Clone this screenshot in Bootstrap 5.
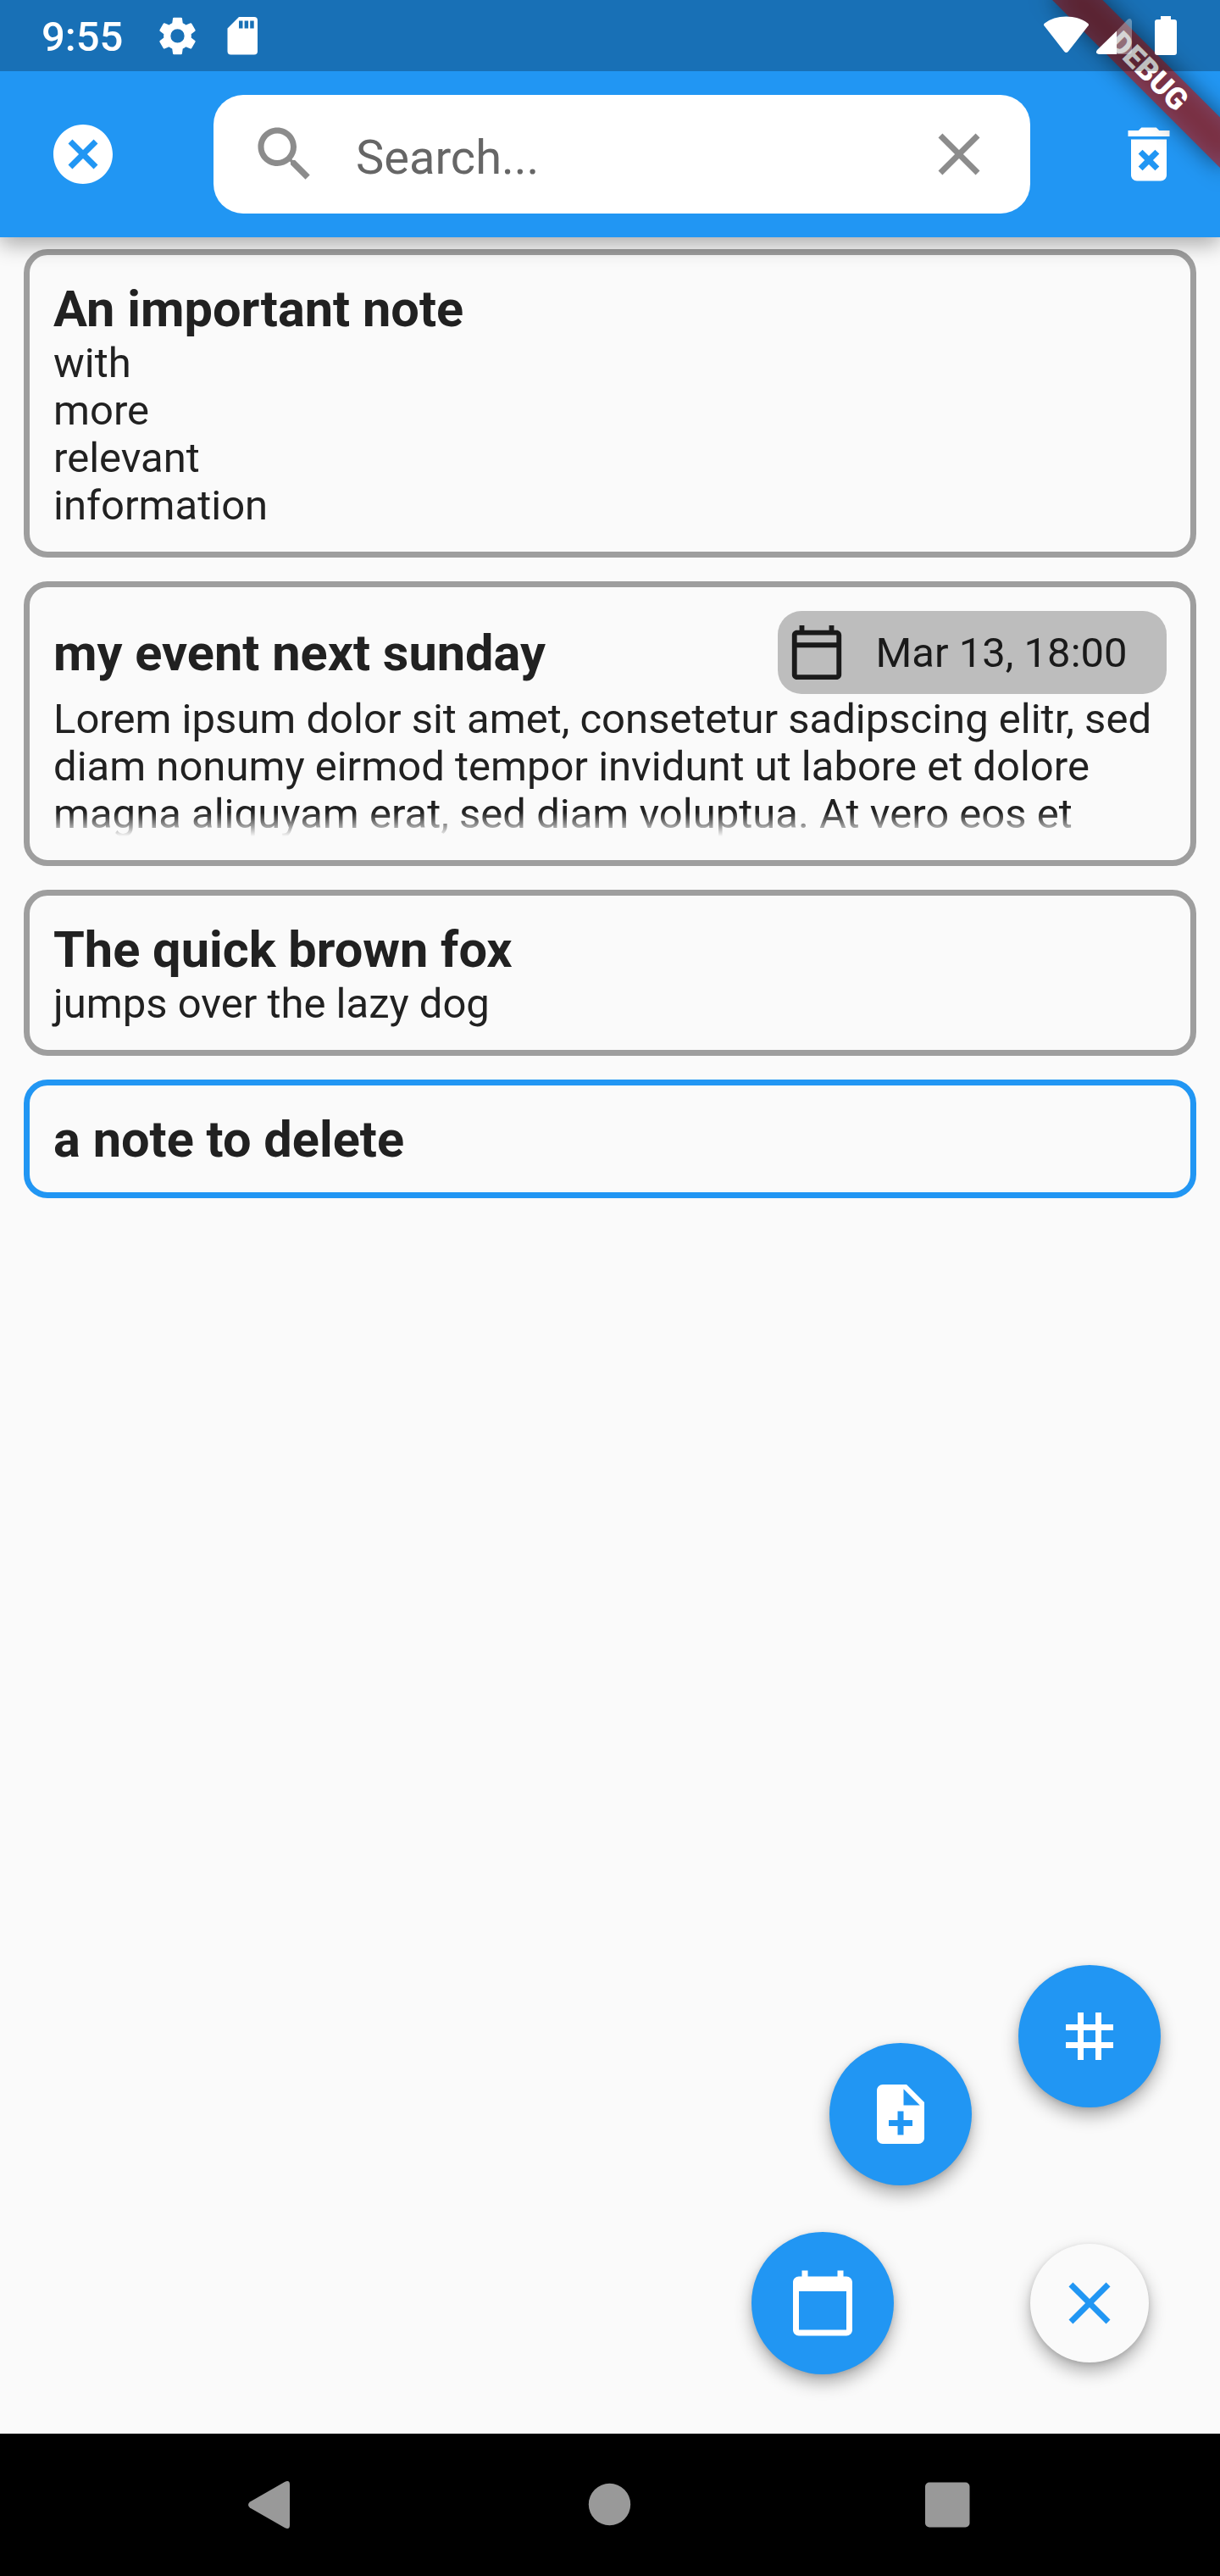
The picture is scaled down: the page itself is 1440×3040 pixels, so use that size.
<!DOCTYPE html>
<html lang="en">
<head>
<meta charset="utf-8">
<meta name="viewport" content="width=device-width, initial-scale=1">
<title>Notes</title>
<link href="https://cdn.jsdelivr.net/npm/bootstrap@5.3.0/dist/css/bootstrap.min.css" rel="stylesheet">
<style>
  body { font-family: Roboto, sans-serif; color: #212121; background: #fafafa; }
  .app-screen { width: 1440px; height: 3040px; background: #fafafa; }
  .status-strip { height: 84px; background: rgba(0,0,0,.25); color: #fff; z-index: 30; }
  .status-clock { font-size: 49px; font-weight: 500; line-height: 84px; padding-left: 49px; width: 188px; padding-top: 2px; }
  .top-shell { background: #2196f3; height: 280px; box-shadow: 0 8px 24px rgba(0,0,0,.33); z-index: 10; }
  .tool-row { height: 196px; padding: 0 42px 0 56px; }
  .ico { width: 84px; height: 84px; fill: currentColor; display: block; flex: none; }
  .search-pill { width: 964px; height: 140px; border-radius: 35px; background: #fff; padding: 0 42px; margin-left: 112px; color: #8c8c8c; }
  .search-pill input { font-size: 56px; line-height: 66px; padding: 7px 0 0; margin-left: 42px; }
  .search-pill input::placeholder { color: #666; opacity: 1; }
  .ribbon-clip { top: 0; right: 0; width: 300px; height: 280px; z-index: 20; pointer-events: none; }
  .ribbon-turn { left: 300px; top: 0; width: 0; height: 0; transform: rotate(45deg); transform-origin: 0 0; }
  .ribbon-shade, .ribbon-band { left: -140px; top: 98px; width: 280px; height: 42px; }
  .ribbon-shade { background: rgba(0,0,0,.5); filter: blur(14px); }
  .ribbon-band { background: rgba(183,28,28,.627); color: #fff; font-size: 35.7px; font-weight: 900; line-height: 42px; }
  .note-list { padding: 14px 28px; gap: 28px; }
  .note-box { border: 7px solid #9e9e9e; border-radius: 28px; padding: 28px; }
  .note-box.picked { border-color: #2196f3; }
  .note-title { font-size: 59.5px; font-weight: 700; line-height: 70px; margin: 0 0 -1px; padding-top: 1px; }
  .note-text { font-size: 49px; line-height: 56px; margin: 0 0 -2px; padding-top: 2px; }
  .note-fade { height: 168px; margin: 0; overflow: hidden; white-space: nowrap; -webkit-mask-image: linear-gradient(#000 calc(100% - 28px), transparent); mask-image: linear-gradient(#000 calc(100% - 28px), transparent); }
  .date-chip { width: 459px; height: 98px; border-radius: 28px; background: #bdbdbd; padding-left: 10.5px; color: #1a1a1a; font-size: 49px; line-height: 56px; }
  .date-chip span { padding-top: 2px; }
  .date-chip .ico { width: 70px; height: 70px; margin-right: 35px; }
  .dial { right: 70px; bottom: 237px; width: 484px; height: 484px; z-index: 5; }
  .dial-btn { width: 168px; height: 168px; background: #2196f3; color: #fff; border: 0; padding: 0; box-shadow: 0 10px 20px rgba(0,0,0,.3), 0 2px 6px rgba(0,0,0,.12); }
  .dial-tag { right: 0; top: 0; }
  .dial-note { left: 93px; top: 92px; }
  .dial-date { left: 1px; top: 315px; }
  .dial-close { width: 140px; height: 140px; right: 14px; top: 329px; background: #fafafa; color: #2196f3; }
  .sys-nav { height: 168px; background: #000; }
</style>
</head>
<body>
<div class="app-screen d-flex flex-column position-relative overflow-hidden">
  <header class="top-shell position-relative flex-shrink-0">
    <div class="status-strip position-relative d-flex">
      <div class="status-clock">9:55</div>
      <svg width="1252" height="84" viewBox="188 0 1252 84" fill="#fff" class="flex-shrink-0">
        <path transform="translate(182.300 15.200)  scale(2.266)" fill-rule="evenodd" d="M19.140 12.940c.04-.3.060-.610.060-.940 0-.32-.02-.64-.07-.94l2.030-1.580c.18-.14.230-.41.120-.610l-1.920-3.320c-.12-.22-.37-.29-.59-.22l-2.390.96c-.5-.38-1.030-.7-1.620-.94l-.36-2.540c-.04-.24-.24-.41-.48-.41h-3.840c-.24 0-.43.170-.470.410l-.36 2.540c-.59.240-1.130.570-1.620.940l-2.390-.96c-.22-.08-.47 0-.59.220L2.740 8.870c-.12.210-.08.470.12.610l2.030 1.580c-.05.3-.09.630-.09.940s.02.640.07.940l-2.030 1.580c-.18.140-.23.410-.12.610l1.920 3.320c.12.220.370.290.590.220l2.390-.96c.5.380 1.030.7 1.620.940l.36 2.540c.05.240.240.410.480.410h3.840c.24 0 .44-.17.470-.41l.36-2.540c.59-.24 1.130-.56 1.620-.94l2.390.96c.22.080.470 0 .59-.22l1.920-3.320c.12-.22.070-.47-.12-.61zM12 15.600a3.600 3.600 0 1 1 0-7.200 3.600 3.600 0 0 1 0 7.200z"/>
        <path fill-rule="evenodd" d="M282 20h18q4 0 4 4v36.500q0 4-4 4h-27.500q-4 0-4-4V33.500zM282 24.500v9h4.500v-9zm6.600 0v9h4.500v-9zm6.600 0v9h4.500v-9z"/>
        <path d="M1233 31q-2-2 0-3.500Q1243 19.500 1258.500 19.500T1284 27.500q2 1.500 0 3.500L1261 60.500q-2.500 3-5 0z"/>
        <path d="M1318 36.500V64h-21q-5-1-2-5z"/>
        <path opacity=".34" d="M1318 36.500V64h14q4 0 4-4V25q-1-4.500-5-2z"/>
        <path d="M1370 19h12v4h4q3 0 3 3v36q0 3-3 3h-20q-3 0-3-3V26q0-3 3-3h4z"/>
      </svg>
    </div>
    <nav class="tool-row d-flex align-items-center text-white">
      <svg class="ico" viewBox="0 0 24 24"><path d="M12 2C6.470 2 2 6.470 2 12s4.470 10 10 10 10-4.470 10-10S17.530 2 12 2zm5 13.590L15.590 17 12 13.410 8.410 17 7 15.590 10.590 12 7 8.410 8.410 7 12 10.590 15.590 7 17 8.410 13.410 12 17 15.590z"/></svg>
      <div class="search-pill d-flex align-items-center">
        <svg class="ico" viewBox="0 0 24 24"><path d="M15.500 14h-.79l-.28-.27C15.410 12.590 16 11.110 16 9.500 16 5.910 13.090 3 9.500 3S3 5.910 3 9.500 5.910 16 9.500 16c1.610 0 3.090-.59 4.230-1.570l.27.280v.79l5 4.990L20.490 19l-4.990-5zm-6 0C7.010 14 5 11.990 5 9.500S7.010 5 9.500 5 14 7.010 14 9.500 11.990 14 9.500 14z"/></svg>
        <input type="text" class="form-control border-0 bg-transparent shadow-none flex-grow-1" placeholder="Search..." aria-label="Search">
        <svg class="ico" viewBox="0 0 24 24"><path d="M19 6.410L17.590 5 12 10.590 6.410 5 5 6.410 10.590 12 5 17.590 6.410 19 12 13.410 17.590 19 19 17.590 13.410 12z"/></svg>
      </div>
      <svg class="ico ms-auto" viewBox="0 0 24 24"><path d="M6 19c0 1.100.9 2 2 2h8c1.100 0 2-.9 2-2V7H6v12zm2.460-7.120l1.410-1.410L12 12.590l2.120-2.120 1.410 1.410L13.410 14l2.120 2.120-1.410 1.410L12 15.410l-2.120 2.120-1.410-1.410L10.590 14l-2.130-2.120zM15.500 4l-1-1h-5l-1 1H5v2h14V4z"/></svg>
    </nav>
    <div class="ribbon-clip position-absolute overflow-hidden">
      <div class="ribbon-turn position-absolute">
        <div class="ribbon-shade position-absolute"></div>
        <div class="ribbon-band position-absolute text-center">DEBUG</div>
      </div>
    </div>
  </header>

  <main class="note-list d-flex flex-column flex-grow-1">
    <article class="note-box">
      <h2 class="note-title">An important note</h2>
      <p class="note-text">with<br>more<br>relevant<br>information</p>
    </article>
    <article class="note-box">
      <div class="d-flex align-items-center justify-content-between">
        <h2 class="note-title">my event next sunday</h2>
        <div class="date-chip d-flex align-items-center">
          <svg class="ico" viewBox="0 0 24 24"><path d="M20 3h-1V1h-2v2H7V1H5v2H4c-1.100 0-2 .9-2 2v16c0 1.100.9 2 2 2h16c1.100 0 2-.9 2-2V5c0-1.100-.9-2-2-2zm0 2v3H4V5h16zM4 21V10h16v11H4z"/></svg>
          <span>Mar 13, 18:00</span>
        </div>
      </div>
      <p class="note-text note-fade">Lorem ipsum dolor sit amet, consetetur sadipscing elitr, sed<br>diam nonumy eirmod tempor invidunt ut labore et dolore<br>magna aliquyam erat, sed diam voluptua. At vero eos et</p>
    </article>
    <article class="note-box">
      <h2 class="note-title">The quick brown fox</h2>
      <p class="note-text">jumps over the lazy dog</p>
    </article>
    <article class="note-box picked">
      <h2 class="note-title">a note to delete</h2>
    </article>
  </main>

  <div class="dial position-absolute">
    <button class="dial-btn dial-tag btn rounded-circle position-absolute d-flex align-items-center justify-content-center" aria-label="Tags"><svg class="ico" viewBox="0 0 24 24"><path d="M20 10V8h-4V4h-2v4h-4V4H8v4H4v2h4v4H4v2h4v4h2v-4h4v4h2v-4h4v-2h-4v-4h4zm-6 4h-4v-4h4v4z"/></svg></button>
    <button class="dial-btn dial-note btn rounded-circle position-absolute d-flex align-items-center justify-content-center" aria-label="Add note"><svg class="ico" viewBox="0 0 24 24"><path d="M14 2H6c-1.100 0-1.990.9-1.990 2L4 20c0 1.100.89 2 1.990 2H18c1.100 0 2-.9 2-2V8l-6-6zm2 14h-3v3h-2v-3H8v-2h3v-3h2v3h3v2zm-3-7V3.500L18.500 9H13z"/></svg></button>
    <button class="dial-btn dial-date btn rounded-circle position-absolute d-flex align-items-center justify-content-center" aria-label="Add event"><svg class="ico" viewBox="0 0 24 24"><path d="M20 3h-1V1h-2v2H7V1H5v2H4c-1.100 0-2 .9-2 2v16c0 1.100.9 2 2 2h16c1.100 0 2-.9 2-2V5c0-1.100-.9-2-2-2zm0 18H4V8h16v13z"/></svg></button>
    <button class="dial-btn dial-close btn rounded-circle position-absolute d-flex align-items-center justify-content-center" aria-label="Close"><svg class="ico" viewBox="0 0 24 24"><path d="M19 6.410L17.590 5 12 10.590 6.410 5 5 6.410 10.590 12 5 17.590 6.410 19 12 13.410 17.590 19 19 17.590 13.410 12z"/></svg></button>
  </div>

  <footer class="sys-nav flex-shrink-0">
    <svg width="1440" height="168" viewBox="0 2872 1440 168" fill="#999" class="d-block">
      <path d="M336 2929q6-3 6 3v48q0 6-6 3L295 2959.500q-4-3.500 0-7z"/>
      <circle cx="719.500" cy="2955.500" r="24.700"/>
      <rect x="1092" y="2929.500" width="52.500" height="53" rx="5"/>
    </svg>
  </footer>
</div>
<script src="https://cdn.jsdelivr.net/npm/bootstrap@5.3.0/dist/js/bootstrap.bundle.min.js"></script>
</body>
</html>
